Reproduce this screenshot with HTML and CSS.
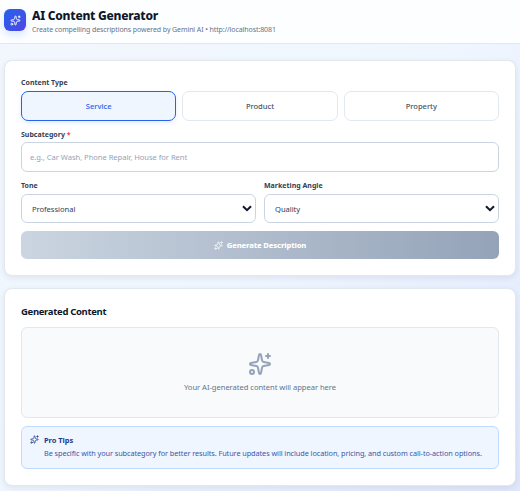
FILE: index.html
```html
<!DOCTYPE html>
<html lang="en">
<head>
<meta charset="utf-8">
<title>AI Content Generator</title>
<link rel="stylesheet" href="styles.css">
</head>
<body>
<svg class="defs" aria-hidden="true">
  <symbol id="sparkles" viewBox="0 0 24 24">
    <path d="M11.017 2.814a1 1 0 0 1 1.966 0l1.051 5.558a2 2 0 0 0 1.594 1.594l5.558 1.051a1 1 0 0 1 0 1.966l-5.558 1.051a2 2 0 0 0-1.594 1.594l-1.051 5.558a1 1 0 0 1-1.966 0l-1.051-5.558a2 2 0 0 0-1.594-1.594l-5.558-1.051a1 1 0 0 1 0-1.966l5.558-1.051a2 2 0 0 0 1.594-1.594z"/>
    <path d="M20 2v4M22 4h-4"/><circle cx="4" cy="20" r="2"/>
  </symbol>
</svg>
<header class="header">
  <div class="logo"><svg class="icon"><use href="#sparkles"/></svg></div>
  <div>
    <h1 class="title"><span>AI Content Generator</span></h1>
    <p class="subtitle"><span>Create compelling descriptions powered by Gemini AI • http://localhost:8081</span></p>
  </div>
</header>
<main class="main">
  <section class="card form">
    <div class="field">
      <div class="label">Content Type</div>
      <div class="types">
        <button class="type active">Service</button>
        <button class="type">Product</button>
        <button class="type">Property</button>
      </div>
    </div>
    <div class="field">
      <div class="label">Subcategory <span class="required">*</span></div>
      <input class="input" placeholder="e.g., Car Wash, Phone Repair, House for Rent">
    </div>
    <div class="row">
      <div class="field">
        <div class="label">Tone</div>
        <div class="select"><span>Professional</span><svg class="chevron" viewBox="0 0 10 7"><path d="M1 1.2 5 5.2 9 1.2"/></svg></div>
      </div>
      <div class="field">
        <div class="label">Marketing Angle</div>
        <div class="select"><span>Quality</span><svg class="chevron" viewBox="0 0 10 7"><path d="M1 1.2 5 5.2 9 1.2"/></svg></div>
      </div>
    </div>
    <button class="generate"><svg class="icon"><use href="#sparkles"/></svg><span>Generate Description</span></button>
  </section>
  <section class="card result">
    <h2 class="heading"><span>Generated Content</span></h2>
    <div class="empty">
      <svg class="icon"><use href="#sparkles"/></svg>
      <p>Your AI-generated content will appear here</p>
    </div>
    <div class="tips">
      <svg class="icon"><use href="#sparkles"/></svg>
      <div>
        <h3 class="tips-title">Pro Tips</h3>
        <p class="tips-text"><span>Be specific with your subcategory for better results. Future updates will include location, pricing, and custom call-to-action options.</span></p>
      </div>
    </div>
  </section>
</main>
</body>
</html>
```

FILE: styles.css
```css
* { box-sizing: border-box; margin: 0; padding: 0; }
body {
  height: 491px;
  overflow: hidden;
  font-family: "Noto Sans", sans-serif;
  font-size: 7.6px;
  letter-spacing: -.04px;
  color: #334155;
  background: linear-gradient(135deg, #f3f7fd 0%, #eff6ff 50%, #e0e7fb 100%);
}
button, input { font: inherit; letter-spacing: inherit; }
.defs { position: absolute; width: 0; height: 0; }
.icon { fill: none; stroke: currentColor; stroke-width: 2; stroke-linecap: round; stroke-linejoin: round; flex: none; }
.header {
  height: 44px;
  display: flex;
  align-items: flex-start;
  gap: 6px;
  padding: 9px 4px 0;
  background: rgba(255, 255, 255, .85);
  border-bottom: 1px solid #e2e8f0;
}
.logo {
  width: 22px;
  height: 22px;
  border-radius: 6px;
  display: flex;
  align-items: center;
  justify-content: center;
  color: #fff;
  background: linear-gradient(135deg, #2563eb, #4f46e5);
  box-shadow: 0 4px 8px rgba(59, 130, 246, .2);
}
.logo .icon { width: 11px; height: 11px; }
.title { font-size: 12px; line-height: 14px; font-weight: 800; letter-spacing: -.25px; color: #0f172a; }
.subtitle { font-size: 7px; line-height: 10px; letter-spacing: -.09px; margin-top: 2px; color: #64748b; }
.main { padding: 16px 4px 0; display: flex; flex-direction: column; gap: 12px; }
.card {
  padding: 16px;
  border: 1px solid #e2e8f0;
  border-radius: 8px;
  background: #fff;
  box-shadow: 0 2px 6px rgba(15, 23, 42, .08);
}
.form { height: 216px; padding-top: 17px; display: flex; flex-direction: column; gap: 8px; }
.label { height: 13px; line-height: 10px; font-size: 7px; font-weight: 700; letter-spacing: .01px; color: #334155; }
.field { flex: 1 1 0; min-width: 0; }
.form > .field { flex: none; }
.form > .field + .field .label { line-height: 11px; }
.required { color: #ef4444; }
.types { display: grid; grid-template-columns: repeat(3, 1fr); gap: 6px; }
.type { height: 30px; border: 1px solid #e2e8f0; border-radius: 7px; background: #fff; color: #475569; font-weight: 500; }
.type.active { border-color: #2563eb; background: #eff6ff; color: #2563eb; box-shadow: 0 2px 5px rgba(59, 130, 246, .14); }
.input { display: block; width: 100%; height: 30px; border: 1px solid #cbd5e1; border-radius: 6px; padding: 0 8px; background: #fff; }
.input::placeholder { color: #94a3b8; }
.row { display: flex; gap: 8px; margin-top: 1px; }
.select {
  height: 29px;
  display: flex;
  align-items: center;
  justify-content: space-between;
  padding: 0 3px 0 10px;
  border: 1px solid #cbd5e1;
  border-radius: 6px;
  background: #fff;
}
.chevron { width: 10px; height: 7px; fill: none; stroke: #0f172a; stroke-width: 2; }
.generate {
  height: 28px;
  flex: none;
  display: flex;
  align-items: center;
  justify-content: center;
  gap: 4px;
  border: 0;
  border-radius: 6px;
  color: #fff;
  font-weight: 800;
  letter-spacing: -.13px;
  background: linear-gradient(90deg, #cbd5e1, #94a3b8);
}
.generate .icon { width: 9px; height: 9px; }
.result { height: 198px; }
.heading { height: 22px; line-height: 13px; font-size: 9.5px; font-weight: 700; letter-spacing: -.32px; color: #0f172a; }
.empty {
  height: 91px;
  display: flex;
  flex-direction: column;
  align-items: center;
  padding-top: 24px;
  border: 1px solid #e2e8f0;
  border-radius: 6px;
  background: #f8fafc;
  color: #64748b;
}
.empty .icon { width: 24px; height: 24px; color: #94a3b8; margin-bottom: 6px; }
.empty p { line-height: 11px; }
.tips { height: 43px; margin-top: 8px; display: flex; gap: 5px; padding: 8px; border: 1px solid #bfdbfe; border-radius: 6px; background: #eff6ff; }
.tips .icon { width: 9px; height: 9px; color: #1e3a8a; }
.tips-title { font-size: 7.5px; line-height: 11px; font-weight: 700; letter-spacing: -.05px; color: #1e3a8a; }
.tips-text { font-size: 7.3px; line-height: 11px; letter-spacing: -.07px; margin-top: 2px; color: #3b56a5; white-space: nowrap; }
```
